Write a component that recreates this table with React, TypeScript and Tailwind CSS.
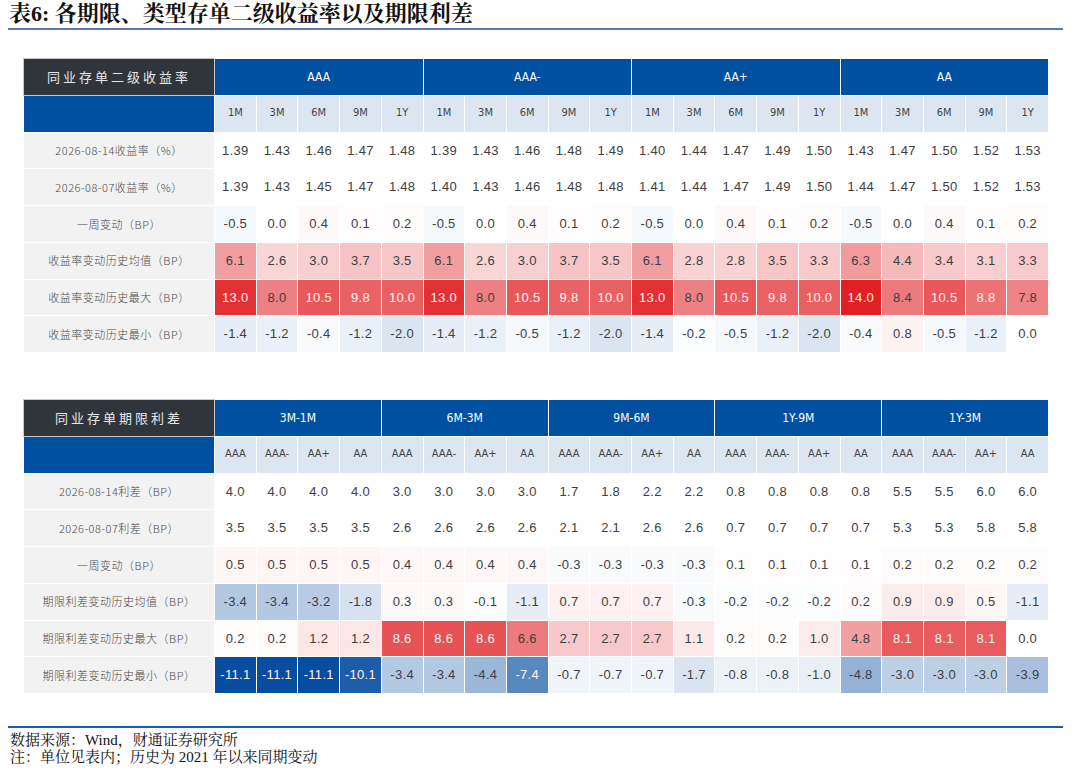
import React from "react";

type Row = { label: string; vals: number[]; heat: boolean; dec: number };
type Tbl = {
  corner: string;
  groups: string[];
  subs: string[];
  span: number;
  rows: Row[];
  max: number;
};

const RED = [224, 32, 36];
const BLUE = [6, 76, 160];

function heat(v: number, m: number) {
  const t = Math.min(1, Math.abs(v) / m);
  const c = v >= 0 ? RED : BLUE;
  const mix = c.map((x) => Math.round(255 + (x - 255) * t));
  return { bg: `rgb(${mix.join(",")})`, light: t > 0.62 };
}

const t1: Tbl = {
  corner: "同业存单二级收益率",
  groups: ["AAA", "AAA-", "AA+", "AA"],
  subs: ["1M", "3M", "6M", "9M", "1Y"],
  span: 5,
  max: 14,
  rows: [
    {
      label: "2026-08-14收益率（%）",
      heat: false,
      dec: 2,
      vals: [1.39, 1.43, 1.46, 1.47, 1.48, 1.39, 1.43, 1.46, 1.48, 1.49, 1.4, 1.44, 1.47, 1.49, 1.5, 1.43, 1.47, 1.5, 1.52, 1.53],
    },
    {
      label: "2026-08-07收益率（%）",
      heat: false,
      dec: 2,
      vals: [1.39, 1.43, 1.45, 1.47, 1.48, 1.4, 1.43, 1.46, 1.48, 1.48, 1.41, 1.44, 1.47, 1.49, 1.5, 1.44, 1.47, 1.5, 1.52, 1.53],
    },
    {
      label: "一周变动（BP）",
      heat: true,
      dec: 1,
      vals: [-0.5, 0, 0.4, 0.1, 0.2, -0.5, 0, 0.4, 0.1, 0.2, -0.5, 0, 0.4, 0.1, 0.2, -0.5, 0, 0.4, 0.1, 0.2],
    },
    {
      label: "收益率变动历史均值（BP）",
      heat: true,
      dec: 1,
      vals: [6.1, 2.6, 3.0, 3.7, 3.5, 6.1, 2.6, 3.0, 3.7, 3.5, 6.1, 2.8, 2.8, 3.5, 3.3, 6.3, 4.4, 3.4, 3.1, 3.3],
    },
    {
      label: "收益率变动历史最大（BP）",
      heat: true,
      dec: 1,
      vals: [13.0, 8.0, 10.5, 9.8, 10.0, 13.0, 8.0, 10.5, 9.8, 10.0, 13.0, 8.0, 10.5, 9.8, 10.0, 14.0, 8.4, 10.5, 8.8, 7.8],
    },
    {
      label: "收益率变动历史最小（BP）",
      heat: true,
      dec: 1,
      vals: [-1.4, -1.2, -0.4, -1.2, -2.0, -1.4, -1.2, -0.5, -1.2, -2.0, -1.4, -0.2, -0.5, -1.2, -2.0, -0.4, 0.8, -0.5, -1.2, 0.0],
    },
  ],
};

const t2: Tbl = {
  corner: "同业存单期限利差",
  groups: ["3M-1M", "6M-3M", "9M-6M", "1Y-9M", "1Y-3M"],
  subs: ["AAA", "AAA-", "AA+", "AA"],
  span: 4,
  max: 11.1,
  rows: [
    {
      label: "2026-08-14利差（BP）",
      heat: false,
      dec: 1,
      vals: [4.0, 4.0, 4.0, 4.0, 3.0, 3.0, 3.0, 3.0, 1.7, 1.8, 2.2, 2.2, 0.8, 0.8, 0.8, 0.8, 5.5, 5.5, 6.0, 6.0],
    },
    {
      label: "2026-08-07利差（BP）",
      heat: false,
      dec: 1,
      vals: [3.5, 3.5, 3.5, 3.5, 2.6, 2.6, 2.6, 2.6, 2.1, 2.1, 2.6, 2.6, 0.7, 0.7, 0.7, 0.7, 5.3, 5.3, 5.8, 5.8],
    },
    {
      label: "一周变动（BP）",
      heat: true,
      dec: 1,
      vals: [0.5, 0.5, 0.5, 0.5, 0.4, 0.4, 0.4, 0.4, -0.3, -0.3, -0.3, -0.3, 0.1, 0.1, 0.1, 0.1, 0.2, 0.2, 0.2, 0.2],
    },
    {
      label: "期限利差变动历史均值（BP）",
      heat: true,
      dec: 1,
      vals: [-3.4, -3.4, -3.2, -1.8, 0.3, 0.3, -0.1, -1.1, 0.7, 0.7, 0.7, -0.3, -0.2, -0.2, -0.2, 0.2, 0.9, 0.9, 0.5, -1.1],
    },
    {
      label: "期限利差变动历史最大（BP）",
      heat: true,
      dec: 1,
      vals: [0.2, 0.2, 1.2, 1.2, 8.6, 8.6, 8.6, 6.6, 2.7, 2.7, 2.7, 1.1, 0.2, 0.2, 1.0, 4.8, 8.1, 8.1, 8.1, 0.0],
    },
    {
      label: "期限利差变动历史最小（BP）",
      heat: true,
      dec: 1,
      vals: [-11.1, -11.1, -11.1, -10.1, -3.4, -3.4, -4.4, -7.4, -0.7, -0.7, -0.7, -1.7, -0.8, -0.8, -1.0, -4.8, -3.0, -3.0, -3.0, -3.9],
    },
  ],
};

const narrow = "font-['Liberation_Sans_Narrow','DejaVu_Sans_Condensed','Liberation_Sans',sans-serif]";

function Table({ t }: { t: Tbl }) {
  const subsAll: string[] = [];
  t.groups.forEach(() => t.subs.forEach((s) => subsAll.push(s)));
  return (
    <div className="grid w-[1024px] grid-cols-[190px_repeat(20,minmax(0,1fr))] grid-rows-[repeat(8,35.75px)] gap-px bg-white">
      <div className="flex items-center justify-center bg-[#30353b] text-[13px] tracking-[3px] text-[#e6e6e6] font-['Noto_Sans_CJK_SC',sans-serif] outline outline-1 outline-[#c8c8c8]">
        {t.corner}
      </div>
      {t.groups.map((g) => (
        <div
          key={g}
          className={`${t.span === 5 ? "col-span-5" : "col-span-4"} flex items-center justify-center bg-[#0050a2] text-[12px] text-white ${narrow}`}
        >
          {g}
        </div>
      ))}
      <div className="bg-[#0050a2]" />
      {subsAll.map((s, i) => (
        <div key={i} className={`flex items-center justify-center bg-[#dce6f1] text-[11px] text-[#444] ${narrow}`}>
          {s}
        </div>
      ))}
      {t.rows.map((r) => (
        <React.Fragment key={r.label}>
          <div className="flex items-center justify-center bg-[#f2f2f2] text-[11px] tracking-[0.5px] text-[#4a4a4a] font-['Noto_Sans_CJK_SC',sans-serif] font-light">
            {r.label}
          </div>
          {r.vals.map((v, i) => {
            const h = r.heat ? heat(v, t.max) : { bg: "#ffffff", light: false };
            return (
              <div
                key={i}
                style={{ backgroundColor: h.bg }}
                className={`flex items-center justify-center text-[13px] tracking-[0.3px] font-['Liberation_Sans',sans-serif] ${h.light ? "text-[#fff4f4]" : "text-[#404040]"}`}
              >
                {v.toFixed(r.dec)}
              </div>
            );
          })}
        </React.Fragment>
      ))}
    </div>
  );
}

export default function App() {
  return (
    <div className="relative h-[774px] w-[1080px] overflow-hidden bg-white">
      <div className="flex h-[28px] items-center pl-[9px] text-[22px] font-bold leading-[28px] text-[#111] font-['Liberation_Serif','Noto_Serif_CJK_SC','Noto_Sans_CJK_SC',serif]">
        表6: 各期限、类型存单二级收益率以及期限利差
      </div>
      <div className="ml-[8px] h-[2px] w-[1055px] bg-[#5b78a6]" />
      <div className="ml-[24px] mt-[29px]">
        <Table t={t1} />
      </div>
      <div className="ml-[24px] mt-[48px]">
        <Table t={t2} />
      </div>
      <div className="ml-[8px] mt-[33px] h-[2px] w-[1055px] bg-[#1a5cb0]" />
      <div className="ml-[10px] mt-[4px] text-[15px] leading-[17px] text-[#111] font-['Liberation_Serif','Noto_Serif_CJK_SC','Noto_Sans_CJK_SC',serif]">
        <div>数据来源：Wind，财通证券研究所</div>
        <div>注：单位见表内；历史为 2021 年以来同期变动</div>
      </div>
    </div>
  );
}
